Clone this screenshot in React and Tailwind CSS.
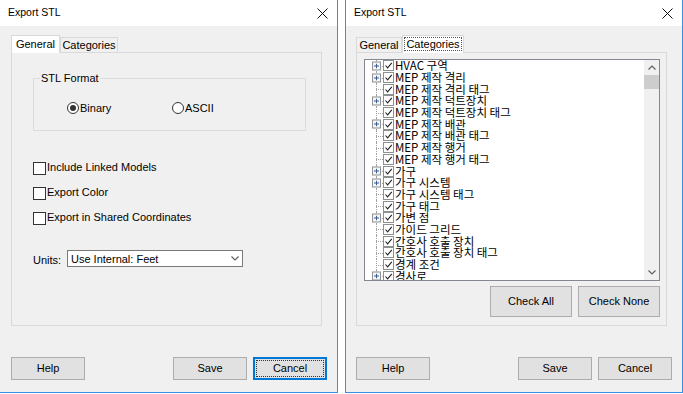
import React from 'react'

const categories = [
  ['HVAC 구역', true],
  ['MEP 제작 격리', true],
  ['MEP 제작 격리 태그', false],
  ['MEP 제작 덕트장치', true],
  ['MEP 제작 덕트장치 태그', false],
  ['MEP 제작 배관', true],
  ['MEP 제작 배관 태그', false],
  ['MEP 제작 행거', false],
  ['MEP 제작 행거 태그', false],
  ['가구', true],
  ['가구 시스템', true],
  ['가구 시스템 태그', false],
  ['가구 태그', false],
  ['가변 점', true],
  ['가이드 그리드', false],
  ['간호사 호출 장치', false],
  ['간호사 호출 장치 태그', false],
  ['경계 조건', false],
  ['경사로', true],
]

function CloseIcon() {
  return (
    <svg width="11" height="11" viewBox="0 0 11 11">
      <path d="M0.5 0.5 L10.5 10.5 M10.5 0.5 L0.5 10.5" stroke="#111" strokeWidth="1" fill="none" />
    </svg>
  )
}

function Chevron({ up = false, color = '#606060' }) {
  return (
    <svg width="8" height="5" viewBox="0 0 8 5">
      <path
        d={up ? 'M0.5 4.5 L4 1 L7.5 4.5' : 'M0.5 0.5 L4 4 L7.5 0.5'}
        stroke={color}
        strokeWidth="1.2"
        fill="none"
      />
    </svg>
  )
}

function Button({ children, focused = false, className = '' }) {
  if (focused) {
    return (
      <button className={`h-[23px] w-[74px] border-2 border-[#0078d7] bg-[#e1e1e1] p-[1px] text-[11px] text-black ${className}`}>
        <span className="flex h-full w-full items-center justify-center border border-dotted border-[#333]">
          {children}
        </span>
      </button>
    )
  }
  return (
    <button className={`flex h-[23px] w-[74px] items-center justify-center border border-[#adadad] bg-[#e1e1e1] text-[11px] text-black ${className}`}>
      {children}
    </button>
  )
}

function Tabs({ active }) {
  const tab = (label, isActive, width) =>
    isActive ? (
      <div
        className={`relative z-10 -mb-px flex h-[18px] ${width} items-start justify-center border border-b-0 border-[#d9d9d9] bg-white pt-[1px] text-[11px]`}
      >
        {active === 'Categories' ? (
          <span className="border border-dotted border-[#555] px-[1px] leading-[12px]">{label}</span>
        ) : (
          <span className="leading-[14px]">{label}</span>
        )}
      </div>
    ) : (
      <div className={`flex h-[15px] ${width} items-start justify-center border border-b-0 border-[#d9d9d9] bg-[#f0f0f0] text-[11px] leading-[14px]`}>
        {label}
      </div>
    )
  return (
    <div className="flex h-[17px] items-end">
      {tab('General', active === 'General', active === 'General' ? 'w-[49px]' : 'w-[46px]')}
      {tab('Categories', active === 'Categories', active === 'Categories' ? 'w-[62px]' : 'w-[58px]')}
    </div>
  )
}

function Radio({ checked, label }) {
  return (
    <div className="flex w-[105px] items-center gap-[1px]">
      <span className="flex h-[12px] w-[12px] items-center justify-center rounded-full border border-[#333] bg-white">
        {checked && <span className="h-[6px] w-[6px] rounded-full bg-[#333]" />}
      </span>
      <span className="text-[11px] leading-[14px]">{label}</span>
    </div>
  )
}

function CheckRow({ label }) {
  return (
    <div className="flex items-center gap-[1px]">
      <span className="h-[13px] w-[13px] border border-[#333] bg-white" />
      <span className="-mt-[3px] text-[11px] leading-[14px]">{label}</span>
    </div>
  )
}

function GeneralPanel() {
  return (
    <div className="h-[274px] w-[311px] border border-[#d9d9d9] bg-[#f0f0f0] pl-[21px] pt-[25px]">
      <div className="relative h-[53px] w-[273px] border border-[#dcdcdc] pl-[33px] pt-[22px]">
        <span className="absolute -top-[8px] left-[6px] bg-[#f0f0f0] px-[1px] text-[11px] leading-[14px]">
          STL Format
        </span>
        <div className="flex">
          <Radio checked label="Binary" />
          <Radio label="ASCII" />
        </div>
      </div>
      <div className="mt-[31px] flex flex-col gap-[12px]">
        <CheckRow label="Include Linked Models" />
        <CheckRow label="Export Color" />
        <CheckRow label="Export in Shared Coordinates" />
      </div>
      <div className="mt-[25px] flex items-end">
        <span className="w-[34px] text-[11px] leading-[14px]">Units:</span>
        <div className="flex h-[17px] w-[176px] items-center justify-between border border-[#7a7a7a] bg-white pl-[3px] pr-[3px]">
          <span className="text-[11px] leading-[14px]">Use Internal: Feet</span>
          <Chevron />
        </div>
      </div>
    </div>
  )
}

function TreeCheck() {
  return (
    <span className="flex h-[11px] w-[11px] shrink-0 items-center justify-center border border-[#8e8f8f] bg-white">
      <svg width="9" height="9" viewBox="0 0 9 9">
        <path d="M1.5 4.5 L3.6 6.8 L7.8 1.8" stroke="#222" strokeWidth="1.1" fill="none" />
      </svg>
    </span>
  )
}

function TreeRow({ label, expandable }) {
  return (
    <div className="flex h-[11.7px] items-center">
      <div className="relative h-full w-[18px] shrink-0">
        <span className="absolute bottom-0 left-[11px] top-0 border-l border-dotted border-[#a0a0a0]" />
        <span className="absolute left-[11px] top-1/2 w-[7px] border-t border-dotted border-[#a0a0a0]" />
        {expandable && (
          <span className="absolute left-[7px] top-1/2 flex h-[9px] w-[9px] -translate-y-1/2 items-center justify-center border border-[#919191] bg-[#f4f6fa]">
            <svg width="5" height="5" viewBox="0 0 5 5">
              <path d="M0 2.5 H5 M2.5 0 V5" stroke="#3b5d95" strokeWidth="1" />
            </svg>
          </span>
        )}
      </div>
      <TreeCheck />
      <span className="whitespace-nowrap pl-[1px] font-['Noto_Sans_CJK_KR',sans-serif] text-[11.5px] leading-[11px]">
        {label}
      </span>
    </div>
  )
}

function CategoriesPanel() {
  return (
    <div className="h-[274px] w-[311px] border border-[#d9d9d9] bg-[#f0f0f0] pl-[7px] pt-[6px]">
      <div className="flex h-[222px] w-[296px] border border-[#828790] bg-white">
        <div className="flex-1 overflow-hidden">
          {categories.map(([label, expandable]) => (
            <TreeRow key={label} label={label} expandable={expandable} />
          ))}
        </div>
        <div className="flex w-[15px] flex-col bg-[#f0f0f0]">
          <div className="flex h-[15px] items-center justify-center">
            <Chevron up />
          </div>
          <div className="h-[14px] bg-[#cdcdcd]" />
          <div className="flex-1" />
          <div className="flex h-[15px] items-center justify-center">
            <Chevron />
          </div>
        </div>
      </div>
      <div className="mt-[5px] flex w-[296px] justify-end gap-[6px]">
        <button className="h-[31px] w-[82px] border border-[#adadad] bg-[#e1e1e1] text-[11px]">Check All</button>
        <button className="h-[31px] w-[82px] border border-[#adadad] bg-[#e1e1e1] text-[11px]">Check None</button>
      </div>
    </div>
  )
}

function Window({ active, border, padLeft }) {
  return (
    <div className={`flex h-[393px] w-[338px] flex-col border-b border-[#3d8ee0] ${border}`}>
      <div className="flex h-[26px] shrink-0 items-center justify-between bg-white pl-[8px] pr-[9px]">
        <span className="text-[10.5px] text-black">Export STL</span>
        <CloseIcon />
      </div>
      <div className={`flex flex-1 flex-col bg-[#f0f0f0] pr-[10px] pt-[9px] ${padLeft}`}>
        <Tabs active={active} />
        {active === 'General' ? <GeneralPanel /> : <CategoriesPanel />}
        <div className="mt-[31px] flex justify-between">
          <Button>Help</Button>
          <div className="flex gap-[6px]">
            <Button>Save</Button>
            <Button focused={active === 'General'}>Cancel</Button>
          </div>
        </div>
      </div>
    </div>
  )
}

export default function App() {
  return (
    <div className="flex h-[394px] w-[683px] gap-[7px] bg-white font-['Liberation_Sans','Noto_Sans_CJK_KR',sans-serif] text-black">
      <Window active="General" border="border-r" padLeft="pl-[11px]" />
      <Window active="Categories" border="border-x" padLeft="pl-[10px]" />
    </div>
  )
}
